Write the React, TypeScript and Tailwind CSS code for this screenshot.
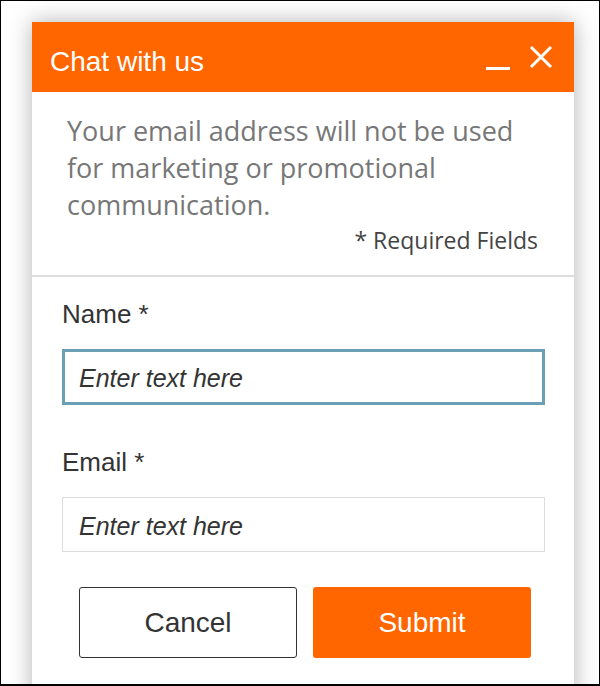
import React from 'react';

const sans = "font-['Liberation_Sans',Arial,sans-serif]";
const openSans = "font-['Open_Sans',sans-serif]";

function Field({ label, focused }: { label: string; focused?: boolean }) {
  return (
    <div className="flex flex-col">
      <label className={`${sans} text-[26px] leading-[30px] text-[#333]`}>{label}</label>
      <div
        className={
          focused
            ? 'mt-[20px] h-[56px] border-[3px] border-[#6a9fb5] flex items-center pl-[14px] pt-[4px]'
            : 'mt-[20px] h-[55px] border border-[#ddd] flex items-center pl-[16px] pt-[4px]'
        }
      >
        <span className={`${sans} italic text-[25px] text-[#333]`}>Enter text here</span>
      </div>
    </div>
  );
}

export default function App() {
  return (
    <div className="w-[600px] h-[686px] overflow-hidden bg-white border border-black border-b-2 pt-[21px] pl-[31px]">
      <div className="w-[542px] h-[700px] bg-white shadow-[0_0_22px_rgba(0,0,0,0.3)]">
        {/* header */}
        <div className="h-[70px] bg-[#ff6600] flex items-center justify-between pl-[18px] pr-[21px]">
          <span className={`${sans} text-[28px] text-white pt-[9px]`}>Chat with us</span>
          <div className="flex items-center gap-[19px]">
            <svg width="24" height="24" viewBox="0 0 24 24" className="mt-[3px]">
              <rect x="0" y="20" width="24" height="3" fill="#fff" />
            </svg>
            <svg width="24" height="24" viewBox="0 0 24 24">
              <path d="M2 2 L22 22 M22 2 L2 22" stroke="#fff" strokeWidth="3" fill="none" />
            </svg>
          </div>
        </div>

        {/* notice */}
        <div className="pt-[20px] pb-[21px] pl-[35px] pr-[36px] border-b-2 border-[#ddd]">
          <p className={`${openSans} text-[27px] leading-[37px] text-[#777]`}>
            Your email address will not be used for marketing or promotional communication.
          </p>
          <p className={`${openSans} text-[23px] leading-[28px] text-[#444] text-right mt-[3px]`}>
            * Required Fields
          </p>
        </div>

        {/* form */}
        <div className="pt-[22px] pl-[30px] pr-[29px]">
          <Field label="Name *" focused />
          <div className="mt-[42px]">
            <Field label="Email *" />
          </div>
          <div className="mt-[35px] flex gap-[16px] pl-[17px]">
            <button
              className={`${sans} w-[218px] h-[71px] border-[1.5px] border-[#333] rounded-[3px] bg-white text-[28px] text-[#333]`}
            >
              Cancel
            </button>
            <button className={`${sans} w-[218px] h-[71px] rounded-[3px] bg-[#ff6600] text-[28px] text-white`}>
              Submit
            </button>
          </div>
        </div>
      </div>
    </div>
  );
}
